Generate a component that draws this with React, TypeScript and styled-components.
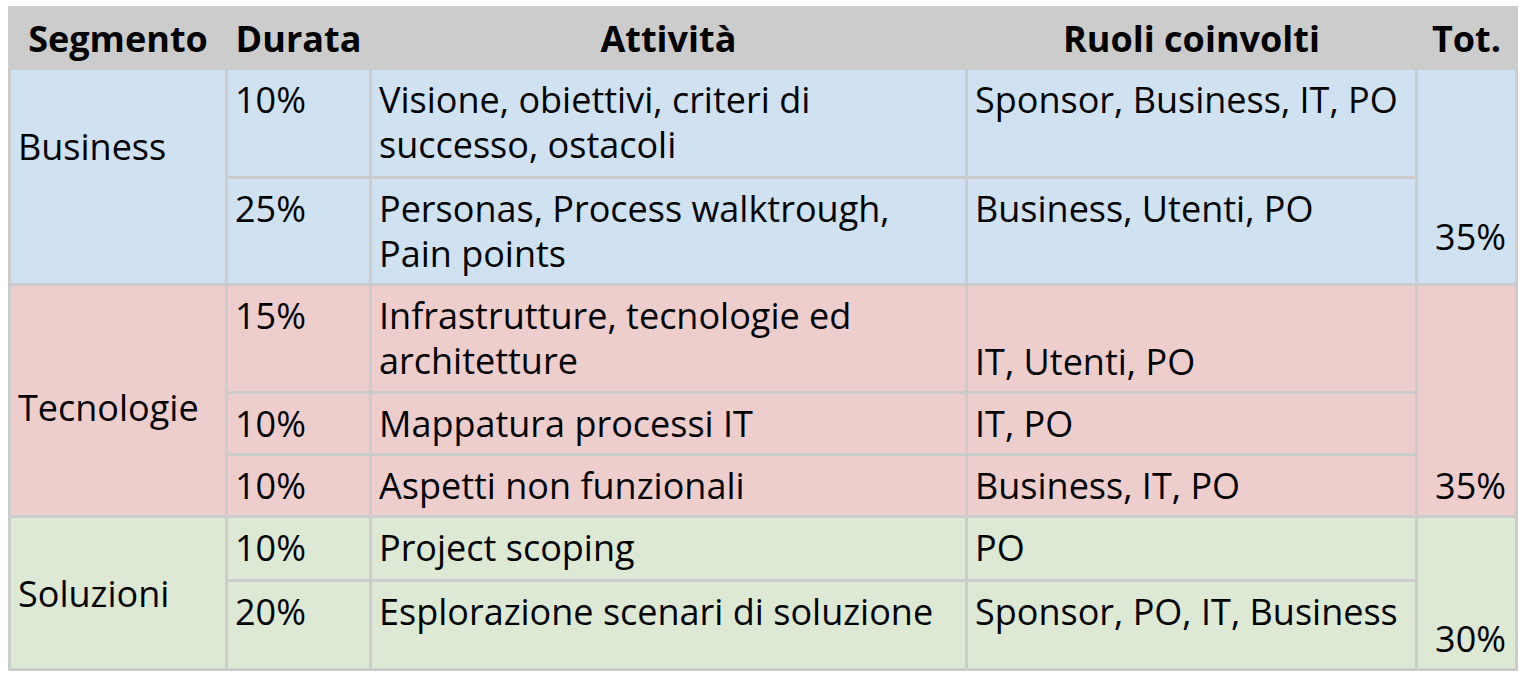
import React from "react";
import styled, { createGlobalStyle } from "styled-components";

const Global = createGlobalStyle`
  html, body { margin: 0; padding: 0; background: #ffffff; }
  body { font-family: "Open Sans", "Noto Sans", sans-serif; color: #000; }
`;

type Tone = "blue" | "red" | "green";
const tones: Record<Tone, string> = {
  blue: "#d0e1f1",
  red: "#eecdcd",
  green: "#dde8d5",
};

const Table = styled.table`
  margin: 6px 0 0 8px;
  width: 1510px;
  table-layout: fixed;
  border-collapse: separate;
  border-spacing: 3px;
  background: #cccccc;
  font-family: "Open Sans", "Noto Sans", sans-serif;
  font-size: 36px;
  line-height: 45px;
`;

const HeadCell = styled.th`
  height: 58px;
  padding: 0 7px;
  font-weight: 700;
  text-align: center;
  vertical-align: middle;
  background: #cccccc;
`;

const Row = styled.tr<{ $h: number }>`
  height: ${(p) => p.$h}px;
`;

const Cell = styled.td<{
  $tone: Tone;
  $v?: "top" | "middle" | "bottom";
  $align?: "left" | "right";
  $pt?: number;
  $pb?: number;
}>`
  background: ${(p) => tones[p.$tone]};
  padding: ${(p) => p.$pt ?? 7}px 9px ${(p) => p.$pb ?? 7}px 7px;
  vertical-align: ${(p) => p.$v ?? "top"};
  text-align: ${(p) => p.$align ?? "left"};
  font-weight: 400;
`;

export default function App() {
  return (
    <>
      <Global />
      <Table>
        <colgroup>
          <col style={{ width: 214 }} />
          <col style={{ width: 141 }} />
          <col style={{ width: 593 }} />
          <col style={{ width: 447 }} />
          <col style={{ width: 97 }} />
        </colgroup>
        <thead>
          <tr>
            <HeadCell>Segmento</HeadCell>
            <HeadCell>Durata</HeadCell>
            <HeadCell>Attività</HeadCell>
            <HeadCell>Ruoli coinvolti</HeadCell>
            <HeadCell>Tot.</HeadCell>
          </tr>
        </thead>
        <tbody>
          <Row $h={106}>
            <Cell $tone="blue" $v="middle" $pb={67} rowSpan={2}>Business</Cell>
            <Cell $tone="blue">10%</Cell>
            <Cell $tone="blue">Visione, obiettivi, criteri di successo, ostacoli</Cell>
            <Cell $tone="blue">Sponsor, Business, IT, PO</Cell>
            <Cell $tone="blue" $v="bottom" $align="right" $pb={24} rowSpan={2}>35%</Cell>
          </Row>
          <Row $h={104}>
            <Cell $tone="blue">25%</Cell>
            <Cell $tone="blue">Personas, Process walktrough, Pain points</Cell>
            <Cell $tone="blue">Business, Utenti, PO</Cell>
          </Row>
          <Row $h={105}>
            <Cell $tone="red" $v="middle" $pt={21} rowSpan={3}>Tecnologie</Cell>
            <Cell $tone="red">15%</Cell>
            <Cell $tone="red">Infrastrutture, tecnologie ed architetture</Cell>
            <Cell $tone="red" $v="bottom">IT, Utenti, PO</Cell>
            <Cell $tone="red" $v="bottom" $align="right" rowSpan={3}>35%</Cell>
          </Row>
          <Row $h={58}>
            <Cell $tone="red">10%</Cell>
            <Cell $tone="red">Mappatura processi IT</Cell>
            <Cell $tone="red">IT, PO</Cell>
          </Row>
          <Row $h={59}>
            <Cell $tone="red">10%</Cell>
            <Cell $tone="red">Aspetti non funzionali</Cell>
            <Cell $tone="red">Business, IT, PO</Cell>
          </Row>
          <Row $h={61}>
            <Cell $tone="green" $v="middle" rowSpan={2}>Soluzioni</Cell>
            <Cell $tone="green">10%</Cell>
            <Cell $tone="green">Project scoping</Cell>
            <Cell $tone="green">PO</Cell>
            <Cell $tone="green" $v="bottom" $align="right" rowSpan={2}>30%</Cell>
          </Row>
          <Row $h={86}>
            <Cell $tone="green">20%</Cell>
            <Cell $tone="green">Esplorazione scenari di soluzione</Cell>
            <Cell $tone="green">Sponsor, PO, IT, Business</Cell>
          </Row>
        </tbody>
      </Table>
    </>
  );
}
